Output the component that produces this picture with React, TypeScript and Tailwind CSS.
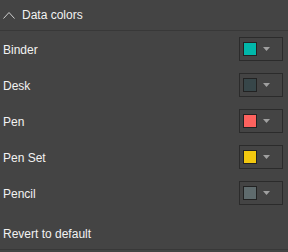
const items = [
  { label: "Binder", color: "bg-[#01b8aa]" },
  { label: "Desk", color: "bg-[#374649]" },
  { label: "Pen", color: "bg-[#fd625e]" },
  { label: "Pen Set", color: "bg-[#f2c80f]" },
  { label: "Pencil", color: "bg-[#5f6b6d]" },
];

function ColorPicker({ color }: { color: string }) {
  return (
    <button
      type="button"
      className="flex h-[24px] w-[44px] items-center border border-[#2b2b2b] pl-[3px]"
    >
      <span className={`size-[14px] border border-[#222] ${color}`} />
      <svg className="ml-[6px]" width="7" height="4" viewBox="0 0 7 4">
        <path d="M0 0h7L3.5 4z" fill="#a0a0a0" />
      </svg>
    </button>
  );
}

export default function App() {
  return (
    <div className="h-[252px] w-[288px] bg-[#444444] text-[12px] text-[#f2f2f2] font-['Liberation_Sans',sans-serif]">
      <div className="flex h-[31px] items-center border-b border-[#383838] pl-[3px]">
        <svg width="12" height="8" viewBox="0 0 12 8" className="mb-[1px]">
          <path d="M0.5 7.5L6 1.5L11.5 7.5" fill="none" stroke="#cfcfcf" strokeWidth="1" />
        </svg>
        <span className="ml-[7px]">Data colors</span>
      </div>
      {items.map((item) => (
        <div key={item.label} className="flex h-[36px] items-center justify-between pl-[3px] pr-[5px]">
          <span className="pt-[2px]">{item.label}</span>
          <ColorPicker color={item.color} />
        </div>
      ))}
      <div className="flex h-[39px] items-center border-b border-[#383838] pl-[3px] pt-[8px]">
        Revert to default
      </div>
    </div>
  );
}
